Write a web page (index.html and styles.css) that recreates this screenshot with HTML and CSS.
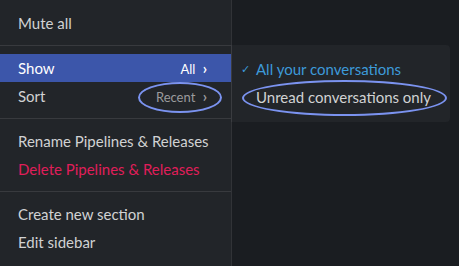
FILE: index.html
```html
<!DOCTYPE html>
<html>

<head>
  <title>Sidebar menu</title>
  <link rel="stylesheet" href="styles.css">
</head>

<body>
  <div class="screen">
    <div class="menu">
      <div class="item">Mute all</div>
      <div class="divider"></div>
      <div class="item active">
        <span>Show</span>
        <span class="value">All <span class="chev">&rsaquo;</span></span>
      </div>
      <div class="item">
        <span>Sort</span>
        <span class="value muted">Recent <span class="chev">&rsaquo;</span></span>
      </div>
      <div class="divider"></div>
      <div class="item">Rename Pipelines &amp; Releases</div>
      <div class="item danger">Delete Pipelines &amp; Releases</div>
      <div class="divider"></div>
      <div class="item">Create new section</div>
      <div class="item">Edit sidebar</div>
    </div>

    <div class="submenu">
      <div class="sub-item selected"><span class="check">&#10003;</span>All your conversations</div>
      <div class="sub-item">Unread conversations only</div>
    </div>

    <!-- highlight rings drawn over the screenshot -->
    <div class="ring ring-recent"></div>
    <div class="ring ring-unread"></div>
  </div>
</body>

</html>
```

FILE: styles.css
```css
body {
  margin: 0;
  background-color: #1a1d21;
  font-family: Lato, "Noto Sans", sans-serif;
}

.screen {
  position: relative;
  width: 459px;
  height: 266px;
  overflow: hidden;
  display: flex;
}

.menu {
  width: 231px;
  padding-top: 9px;
  background-color: #222529;
  border-right: 1px solid #313337;
}

.item {
  height: 28px;
  padding: 0 24px 0 18px;
  display: flex;
  align-items: center;
  justify-content: space-between;
  font-size: 15px;
  white-space: nowrap;
  color: #d1d2d3;
}

.item.active {
  background-color: #3c56aa;
  color: #ffffff;
}

.item.danger {
  color: #e01e5a;
}

.value {
  font-size: 13px;
  color: #ffffff;
}

.value.muted {
  color: #9a9b9d;
}

.chev {
  margin-left: 4px;
  font-size: 15px;
  font-weight: bold;
}

.divider {
  height: 1px;
  margin: 8px 0;
  background-color: #383a3e;
}

.submenu {
  position: absolute;
  left: 231px;
  top: 45px;
  width: 219px;
  height: 77px;
  padding: 10px 0;
  box-sizing: border-box;
  background-color: #222529;
  border-left: 1px solid #3a3c40;
  border-radius: 0 4px 4px 0;
}

.sub-item {
  height: 28px;
  padding-left: 24px;
  display: flex;
  align-items: center;
  position: relative;
  font-size: 15px;
  white-space: nowrap;
  color: #d1d2d3;
}

.sub-item.selected {
  color: #3d9ad9;
}

.check {
  position: absolute;
  left: 9px;
  font-size: 11px;
}

.ring {
  position: absolute;
  border: 2.5px solid #7b93f0;
  border-radius: 50%;
}

.ring-recent {
  left: 138px;
  top: 82px;
  width: 80px;
  height: 27px;
}

.ring-unread {
  left: 242px;
  top: 80px;
  width: 201px;
  height: 32px;
}
```
